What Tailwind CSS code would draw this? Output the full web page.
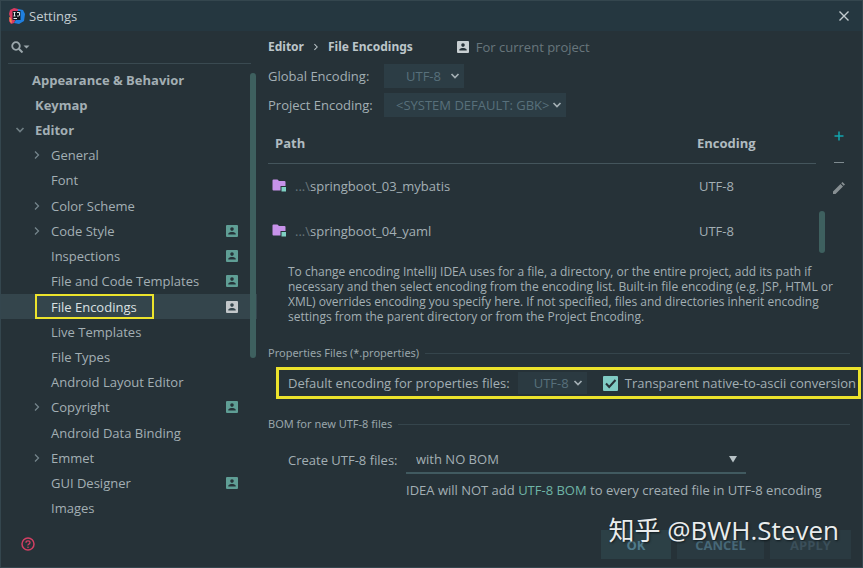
<!DOCTYPE html>
<html lang="en">
<head>
<meta charset="utf-8">
<meta name="viewport" content="width=device-width, initial-scale=1">
<title>Settings</title>
<script src="https://cdn.jsdelivr.net/npm/@tailwindcss/browser@4"></script>
</head>
<body class="bg-[#263238]">
<svg class="hidden" aria-hidden="true">
  <symbol id="badge" viewBox="0 0 12 12"><path fill-rule="evenodd" fill="currentColor" d="M1 0h10a1 1 0 0 1 1 1v10a1 1 0 0 1-1 1H1a1 1 0 0 1-1-1V1a1 1 0 0 1 1-1zM6 2.3a1.8 1.8 0 1 0 0 3.6a1.8 1.8 0 0 0 0-3.6zM2.3 9.6h7.4V8.7C9.7 7.4 7.400 6.900 6 6.900S2.300 7.400 2.300 8.700z"/></symbol>
  <symbol id="right" viewBox="0 0 8 10"><path d="M2 1.500L5.500 5L2 8.500" fill="none" stroke="currentColor" stroke-width="1.300"/></symbol>
  <symbol id="down" viewBox="0 0 10 8"><path d="M1.500 2L5 5.500L8.500 2" fill="none" stroke="currentColor" stroke-width="1.700"/></symbol>
  <symbol id="folder" viewBox="0 0 15 13"><path d="M1.500 0.500h4l1.500 1.500h5.500a1 1 0 0 1 1 1V7H8.500v4.500h-7a1 1 0 0 1-1-1v-9a1 1 0 0 1 1-1z" fill="#c792ea"/><path d="M9.500 8h4.500v4.500H9.500z" fill="#7fd1c4"/></symbol>
</svg>
<div class="flex min-h-screen flex-col border border-[#34464e] bg-[#263238] font-['Open_Sans','Noto_Sans_CJK_SC',sans-serif] text-[13px] leading-5 text-[#a3afb4]">
  <header class="flex h-[30px] shrink-0 items-center bg-[#253740] pl-2 pr-3">
    <svg class="size-4" viewBox="0 0 16 16" aria-hidden="true">
      <path d="M1 2L5 0l4 1v5L5 15l-3 1-2-3 1-4-1-3z" fill="#d93a62"/>
      <path d="M9 1l5 1 2 4-1 7-5 3-5-1 3-5z" fill="#1f7fe0"/>
      <path d="M0 9l2 1 1 5-2-1z" fill="#f28a4a"/>
      <path d="M3.500 3h8v9h-8z" fill="#111820"/>
      <path d="M4.500 4.500h2M5.500 4.500v3.500M4.500 8h2M8 4.500h2.500V7q0 1-1 1H8M4.500 10.500H8" stroke="#e4e9eb" fill="none"/>
    </svg>
    <h1 class="ml-1 grow text-[#c3ccd0]">Settings</h1>
    <button aria-label="Close" class="text-[#c3ccd0]"><svg class="size-3" viewBox="0 0 12 12"><path d="M1.500 1.500l9 9M10.500 1.500l-9 9" stroke="currentColor" stroke-width="1.400"/></svg></button>
  </header>
  <div class="flex grow">
    <aside class="flex w-64 shrink-0 flex-col">
      <label class="ml-[7px] mr-[6px] flex h-[33px] items-center border-b border-[#3a4a51] pl-[3px] text-[#9ba7ac]">
        <svg class="h-3 w-5 shrink-0" viewBox="0 0 20 12" aria-hidden="true"><circle cx="5" cy="5" r="3.800" fill="none" stroke="currentColor" stroke-width="1.800"/><path d="M7.800 7.800l3.700 3.700" stroke="currentColor" stroke-width="2"/><path d="M12.500 4.500h6l-3 3z" fill="currentColor"/></svg>
        <input type="search" aria-label="Search settings" class="min-w-0 grow bg-transparent outline-none">
      </label>
      <nav class="relative mt-[3px] flex grow flex-col">
        <a href="#" class="flex grow basis-0 items-center pl-[31px] font-bold">Appearance &amp; Behavior</a>
        <a href="#" class="flex grow basis-0 items-center pl-[34px] font-bold">Keymap</a>
        <a href="#" class="flex grow basis-0 items-center pl-[14px] font-bold"><svg class="mr-[10px] h-2 w-[10px] text-[#6f7e84]"><use href="#down"/></svg>Editor</a>
        <a href="#" class="flex grow basis-0 items-center pl-8"><svg class="mr-[10px] h-[10px] w-2 text-[#74848b]"><use href="#right"/></svg>General</a>
        <a href="#" class="flex grow basis-0 items-center pl-[50px]">Font</a>
        <a href="#" class="flex grow basis-0 items-center pl-8"><svg class="mr-[10px] h-[10px] w-2 text-[#74848b]"><use href="#right"/></svg>Color Scheme</a>
        <a href="#" class="flex grow basis-0 items-center pl-8 pr-[19px]"><svg class="mr-[10px] h-[10px] w-2 text-[#74848b]"><use href="#right"/></svg><span class="grow">Code Style</span><svg class="size-3 text-[#5f9e95]"><use href="#badge"/></svg></a>
        <a href="#" class="flex grow basis-0 items-center pl-[50px] pr-[19px]"><span class="grow">Inspections</span><svg class="size-3 text-[#5f9e95]"><use href="#badge"/></svg></a>
        <a href="#" class="flex grow basis-0 items-center pl-[50px] pr-[19px]"><span class="grow">File and Code Templates</span><svg class="size-3 text-[#5f9e95]"><use href="#badge"/></svg></a>
        <a href="#" class="relative flex grow basis-0 items-center bg-[#34454c] pl-[50px] pr-[19px] text-[#dbe1e3]"><span class="absolute inset-y-0 left-[34px] w-[119px] border-2 border-[#ece32c]"></span><span class="grow">File Encodings</span><svg class="size-3 text-[#c2c7ca]"><use href="#badge"/></svg></a>
        <a href="#" class="flex grow basis-0 items-center pl-[50px]">Live Templates</a>
        <a href="#" class="flex grow basis-0 items-center pl-[50px]">File Types</a>
        <a href="#" class="flex grow basis-0 items-center pl-[50px]">Android Layout Editor</a>
        <a href="#" class="flex grow basis-0 items-center pl-8 pr-[19px]"><svg class="mr-[10px] h-[10px] w-2 text-[#74848b]"><use href="#right"/></svg><span class="grow">Copyright</span><svg class="size-3 text-[#5f9e95]"><use href="#badge"/></svg></a>
        <a href="#" class="flex grow basis-0 items-center pl-[50px]">Android Data Binding</a>
        <a href="#" class="flex grow basis-0 items-center pl-8"><svg class="mr-[10px] h-[10px] w-2 text-[#74848b]"><use href="#right"/></svg>Emmet</a>
        <a href="#" class="flex grow basis-0 items-center pl-[50px] pr-[19px]"><span class="grow">GUI Designer</span><svg class="size-3 text-[#5f9e95]"><use href="#badge"/></svg></a>
        <a href="#" class="flex grow basis-0 items-center pl-[50px]">Images</a>
        <span class="absolute right-[1px] top-[6px] h-[285px] w-[6px] rounded-sm bg-[#3e605f]"></span>
      </nav>
      <div class="flex h-[46px] items-center pl-5">
        <button aria-label="Help" class="text-[#d23f63]"><svg class="size-[14px]" viewBox="0 0 14 14"><circle cx="7" cy="7" r="6" fill="none" stroke="currentColor" stroke-width="1.500"/><path d="M5 5.700Q5 3.800 7 3.800T9 5.600Q9 6.500 7.900 7.100T7 8.500" fill="none" stroke="currentColor" stroke-width="1.300"/><circle cx="7" cy="10.300" r=".8" fill="currentColor"/></svg></button>
      </div>
    </aside>
    <main class="flex min-w-0 grow flex-col pl-[11px]">
      <div class="flex h-8 items-center">
        <h2 class="flex items-center font-['Noto_Sans',sans-serif] text-xs font-bold text-[#bcc6ca]">Editor<svg class="mx-2 h-2 w-2"><use href="#right"/></svg>File Encodings</h2>
        <svg class="ml-11 mr-[7px] size-3 text-[#c8cfd2]"><use href="#badge"/></svg>
        <span class="text-[#68767c]">For current project</span>
      </div>
      <div class="mt-px grid grid-cols-[116px_1fr] items-center gap-y-[5px]">
        <label for="global">Global Encoding:</label>
        <div class="relative w-20">
          <select id="global" class="block h-6 w-full appearance-none bg-[#2c3d45] pl-[22px] text-[13px] text-[#58707b]"><option>UTF-8</option></select>
          <svg class="pointer-events-none absolute right-1 top-2 h-2 w-[10px] text-[#a3afb4]"><use href="#down"/></svg>
        </div>
        <label for="project">Project Encoding:</label>
        <div class="relative w-[182px]">
          <select id="project" class="block h-6 w-full appearance-none bg-[#2c3d45] pl-3 text-[13px] text-[#58707b]"><option>&lt;SYSTEM DEFAULT: GBK&gt;</option></select>
          <svg class="pointer-events-none absolute right-1 top-2 h-2 w-[10px] text-[#a3afb4]"><use href="#down"/></svg>
        </div>
      </div>
      <div class="mt-[6px] flex">
        <table class="grow table-fixed border-collapse text-left">
          <thead><tr class="h-10 border-b border-[#44555c] text-[#b0bbc0]"><th class="w-[77%] pl-[7px] font-bold">Path</th><th class="pl-[7px] font-bold">Encoding</th></tr></thead>
          <tbody>
            <tr class="h-[45px]"><td class="pl-1"><span class="flex items-center"><svg class="mr-2 h-[15px] w-[15px]"><use href="#folder"/></svg><span class="text-[#66757b]">...\</span>springboot_03_mybatis</span></td><td class="pl-[9px]">UTF-8</td></tr>
            <tr class="h-[45px]"><td class="pl-1"><span class="flex items-center"><svg class="mr-2 h-[15px] w-[15px]"><use href="#folder"/></svg><span class="text-[#66757b]">...\</span>springboot_04_yaml</span></td><td class="pl-[9px]">UTF-8</td></tr>
          </tbody>
        </table>
        <div class="flex w-3 items-end justify-center"><span class="h-[42px] w-[6px] rounded-sm bg-[#3e605f]"></span></div>
        <div class="flex w-[34px] flex-col items-center gap-[14px] pt-[7px] pr-3">
          <button aria-label="Add" class="text-[#12a5ae]"><svg class="size-3" viewBox="0 0 12 12"><path d="M6 1.500v9M1.500 6h9" stroke="currentColor" stroke-width="1.500"/></svg></button>
          <button aria-label="Remove" class="text-[#7f8b90]"><svg class="size-3" viewBox="0 0 12 12"><path d="M1 6.500h10" stroke="currentColor"/></svg></button>
          <button aria-label="Edit" class="text-[#878f92]"><svg class="size-3" viewBox="0 0 12 12"><path d="M0 9.500L7.500 2l2.500 2.500L2.500 12H0zM8.200 1.300L9.500 0L12 2.500L10.700 3.800z" fill="currentColor"/></svg></button>
        </div>
      </div>
      <p class="ml-5 mt-[11px] mr-3 text-xs leading-[15px]">To change encoding IntelliJ IDEA uses for a file, a directory, or the entire project, add its path if<br>necessary and then select encoding from the encoding list. Built-in file encoding (e.g. JSP, HTML or<br>XML) overrides encoding you specify here. If not specified, files and directories inherit encoding<br>settings from the parent directory or from the Project Encoding.</p>
      <h3 class="mt-[19px] mr-3 flex items-center gap-[6px] font-['Noto_Sans',sans-serif] text-[11px] leading-5 text-[#98a5aa] after:h-px after:grow after:bg-[#35454c]">Properties Files (*.properties)</h3>
      <div class="ml-2 mt-1 mr-px flex h-8 items-center border-[3px] border-[#ece32c] pl-[9px]">
        <label for="props" class="whitespace-nowrap">Default encoding for properties files:</label>
        <div class="relative ml-2 w-[69px] shrink-0">
          <select id="props" class="block h-[22px] w-full appearance-none bg-[#2b3a41] pl-4 text-[13px] text-[#58707b]"><option>UTF-8</option></select>
          <svg class="pointer-events-none absolute right-1 top-[7px] h-2 w-[10px] text-[#a3afb4]"><use href="#down"/></svg>
        </div>
        <label class="ml-4 flex items-center gap-[7px] whitespace-nowrap">
          <span class="relative size-[15px]">
            <input type="checkbox" checked class="block size-[15px] appearance-none rounded-[1px] bg-[#80cbc4]">
            <svg class="pointer-events-none absolute inset-0" viewBox="0 0 15 15"><path d="M3 7.500l3.200 3.500L12.500 4" fill="none" stroke="#263238" stroke-width="2"/></svg>
          </span>
          Transparent native-to-ascii conversion
        </label>
      </div>
      <h3 class="mt-[15px] mr-3 flex items-center gap-[6px] font-['Noto_Sans',sans-serif] text-[11px] leading-5 text-[#98a5aa] after:h-px after:grow after:bg-[#35454c]">BOM for new UTF-8 files</h3>
      <div class="ml-5 mt-[11px] grid grid-cols-[118px_1fr] items-center gap-y-[6px]">
        <label for="bom">Create UTF-8 files:</label>
        <div class="relative mr-[116px]">
          <select id="bom" class="block h-[29px] w-full appearance-none border-b-2 border-[#415a60] bg-transparent pl-[10px] text-[13px]"><option>with NO BOM</option></select>
          <svg class="pointer-events-none absolute right-2 top-[10px] h-2 w-[10px]" viewBox="0 0 10 8"><path d="M1 1h8L5 7.500z" fill="#b7c2c6"/></svg>
        </div>
        <p class="col-start-2 whitespace-nowrap">IDEA will NOT add <a href="#" class="text-[#6fb5a6]">UTF-8 BOM</a> to every created file in UTF-8 encoding</p>
      </div>
      <footer class="relative mt-auto mb-2 mr-[11px] flex h-[29px] justify-end gap-[6px] font-bold">
        <button class="w-[70px] bg-[#2c4046] text-[#507b8c]">OK</button>
        <button class="w-[87px] bg-[#2a3a41] text-[#476878]">CANCEL</button>
        <button class="w-[81px] bg-[#2a3a41] text-[#3b4f5a]">APPLY</button>
        <span class="pointer-events-none absolute -top-4 right-3 whitespace-nowrap text-[26px] leading-8 font-normal text-[#e9eced] [text-shadow:1px_1px_2px_#101a1e]">知乎 @BWH.Steven</span>
      </footer>
    </main>
  </div>
</div>
</body>
</html>
